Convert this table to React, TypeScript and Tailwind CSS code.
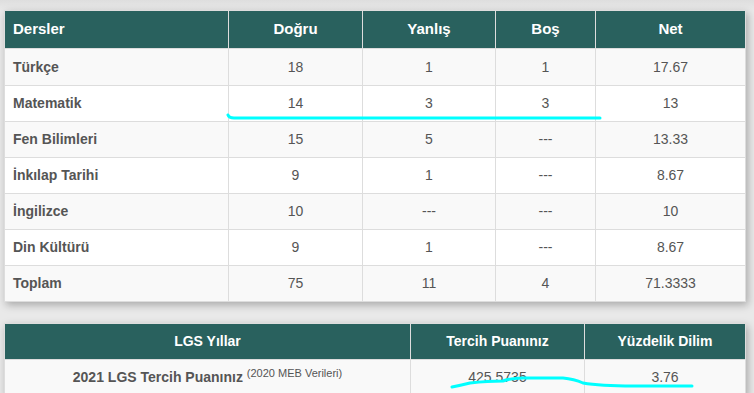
const dersler = [
  { name: "Türkçe", dogru: "18", yanlis: "1", bos: "1", net: "17.67" },
  { name: "Matematik", dogru: "14", yanlis: "3", bos: "3", net: "13" },
  { name: "Fen Bilimleri", dogru: "15", yanlis: "5", bos: "---", net: "13.33" },
  { name: "İnkılap Tarihi", dogru: "9", yanlis: "1", bos: "---", net: "8.67" },
  { name: "İngilizce", dogru: "10", yanlis: "---", bos: "---", net: "10" },
  { name: "Din Kültürü", dogru: "9", yanlis: "1", bos: "---", net: "8.67" },
  { name: "Toplam", dogru: "75", yanlis: "11", bos: "4", net: "71.3333" },
];

export default function App() {
  return (
    <div className="relative h-[393px] w-[754px] overflow-hidden bg-[#e9e9e9] font-['Liberation_Sans',Arial,sans-serif] text-[14px] text-[#555]">
      <div className="h-[10px] bg-gradient-to-b from-[#dedede] to-[#e9e9e9]" />

      <table className="ml-[4px] w-[741px] table-fixed border-collapse bg-white shadow-[2px_3px_8px_rgba(0,0,0,0.28)]">
        <colgroup>
          <col className="w-[224px]" />
          <col className="w-[134px]" />
          <col className="w-[133px]" />
          <col className="w-[100px]" />
          <col className="w-[150px]" />
        </colgroup>
        <thead>
          <tr className="h-[38px] bg-[#29615e] text-[15px] font-bold text-white">
            <th className="border border-[#dddddd] px-[8px] text-left">Dersler</th>
            <th className="border border-[#dddddd]">Doğru</th>
            <th className="border border-[#dddddd]">Yanlış</th>
            <th className="border border-[#dddddd]">Boş</th>
            <th className="border border-[#dddddd]">Net</th>
          </tr>
        </thead>
        <tbody>
          {dersler.map((d, i) => (
            <tr
              key={d.name}
              className={`${i === 0 ? "h-[37px]" : "h-[36px]"} ${i % 2 === 0 ? "bg-[#f9f9f9]" : "bg-white"}`}
            >
              <td className="border border-[#dddddd] px-[8px] font-bold">{d.name}</td>
              <td className="border border-[#dddddd] text-center">{d.dogru}</td>
              <td className="border border-[#dddddd] text-center">{d.yanlis}</td>
              <td className="border border-[#dddddd] text-center">{d.bos}</td>
              <td className="border border-[#dddddd] text-center">{d.net}</td>
            </tr>
          ))}
        </tbody>
      </table>

      <table className="ml-[4px] mt-[21px] w-[741px] table-fixed border-collapse bg-white shadow-[2px_3px_8px_rgba(0,0,0,0.28)]">
        <colgroup>
          <col className="w-[406px]" />
          <col className="w-[174px]" />
          <col className="w-[161px]" />
        </colgroup>
        <thead>
          <tr className="h-[36px] bg-[#29615e] text-[14px] font-bold text-white">
            <th className="border border-[#dddddd]">LGS Yıllar</th>
            <th className="border border-[#dddddd]">Tercih Puanınız</th>
            <th className="border border-[#dddddd]">Yüzdelik Dilim</th>
          </tr>
        </thead>
        <tbody>
          <tr className="h-[36px] bg-[#f9f9f9]">
            <td className="border border-[#dddddd] text-center font-bold">
              2021 LGS Tercih Puanınız{" "}
              <sup className="text-[11px] font-normal">(2020 MEB Verileri)</sup>
            </td>
            <td className="border border-[#dddddd] text-center">425.5735</td>
            <td className="border border-[#dddddd] text-center">3.76</td>
          </tr>
        </tbody>
      </table>

      <svg className="pointer-events-none absolute left-0 top-0" width="754" height="393" viewBox="0 0 754 393">
        <path
          d="M228 115 Q229 118 234 118 L600 118"
          fill="none"
          stroke="#00ffff"
          strokeWidth="3"
          strokeLinecap="round"
        />
        <path
          d="M452 387 Q462 385 470 383 Q488 381 503 381 Q512 378 522 378 L563 378 Q574 379 583 383 Q600 386 633 386 L692 386"
          fill="none"
          stroke="#00ffff"
          strokeWidth="3"
          strokeLinecap="round"
        />
      </svg>
    </div>
  );
}
